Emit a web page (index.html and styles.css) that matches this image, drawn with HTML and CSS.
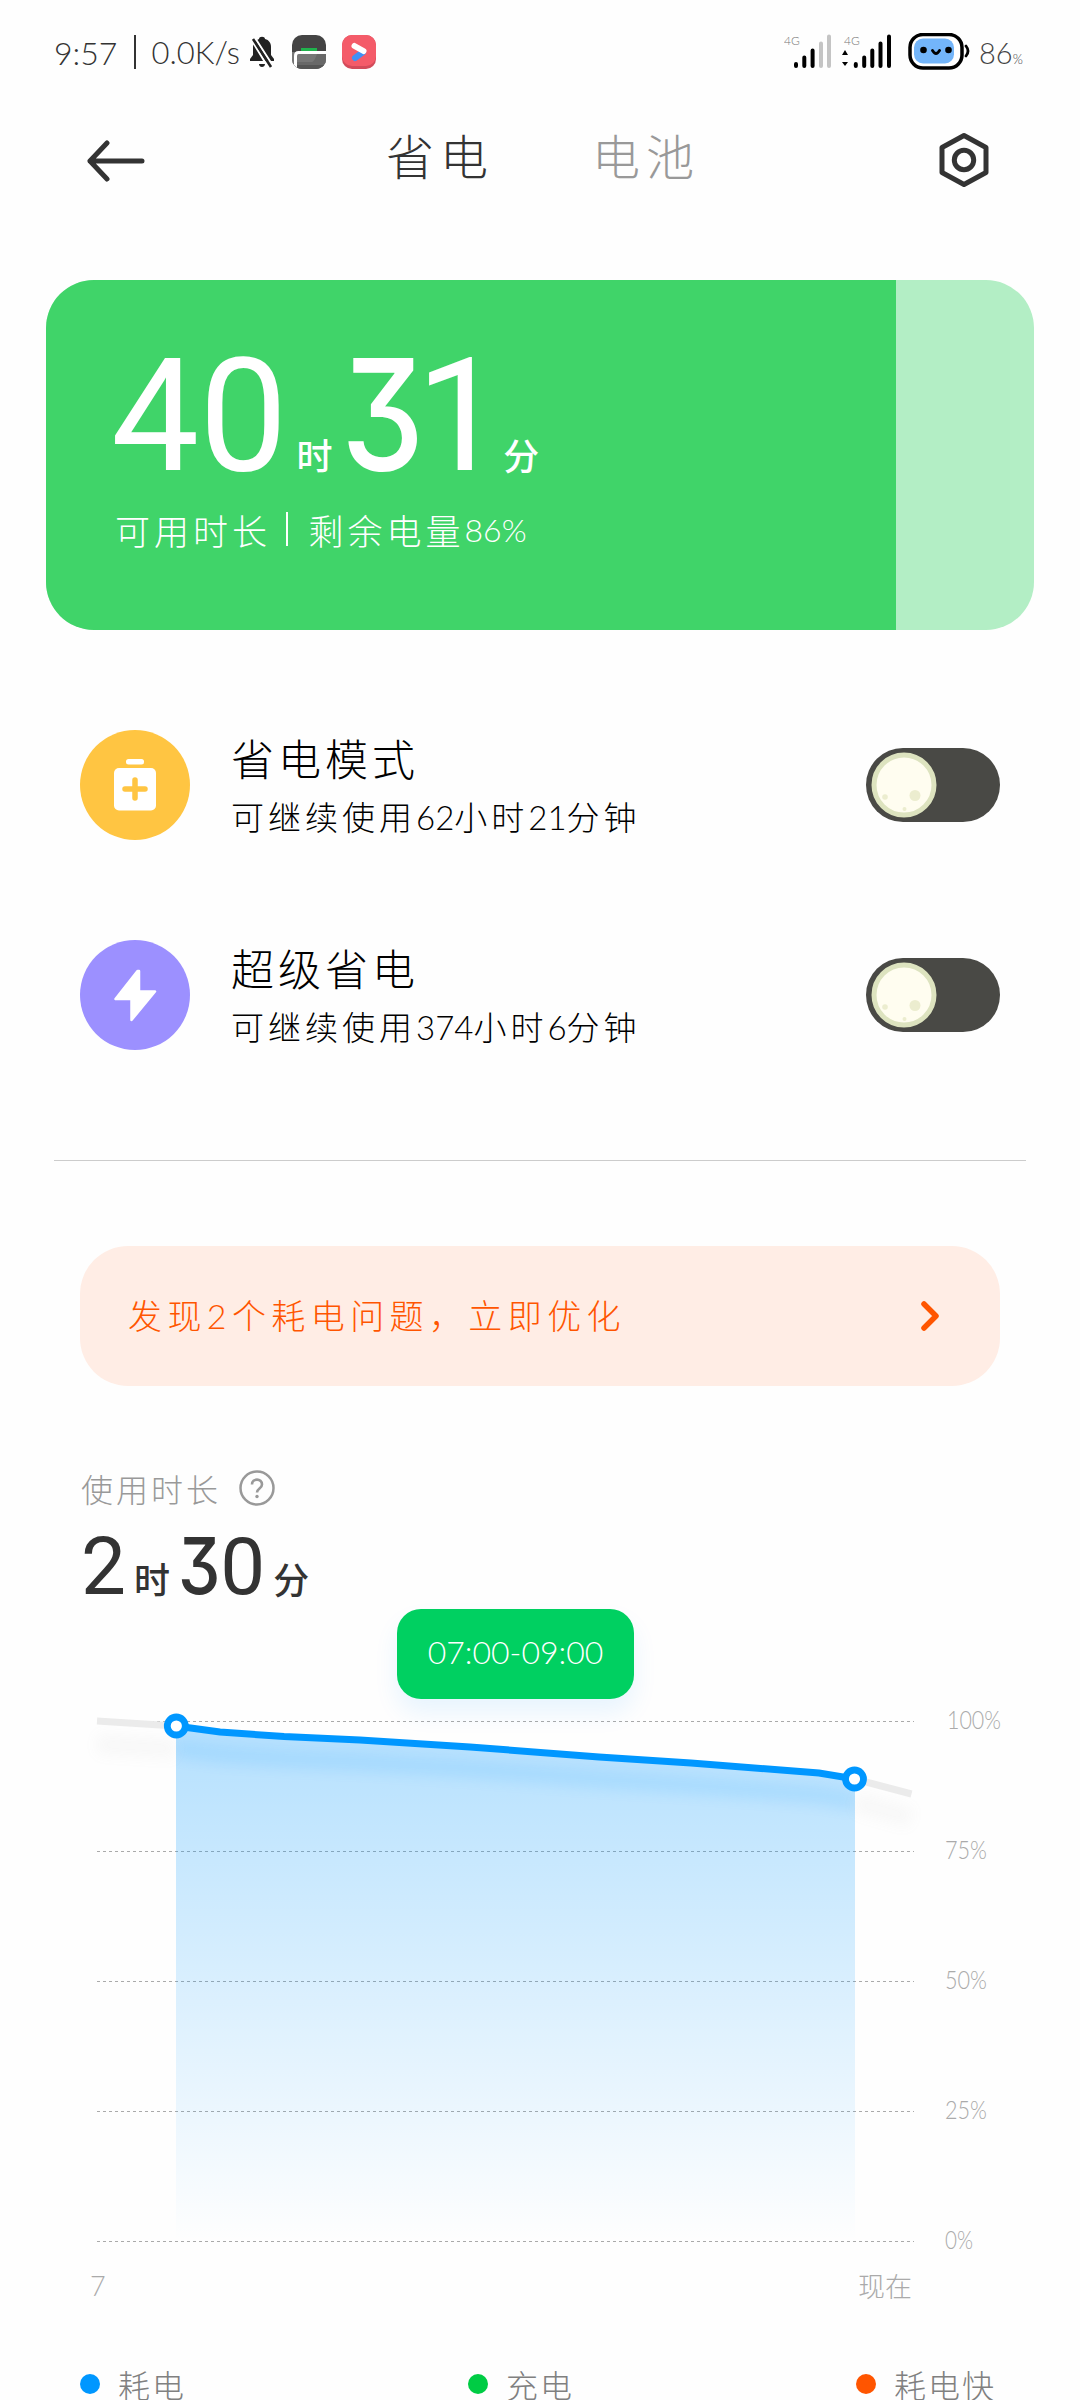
FILE: index.html
```html
<!DOCTYPE html>
<html lang="zh-CN">
<head>
<meta charset="utf-8">
<title>省电</title>
<link rel="stylesheet" href="styles.css">
</head>
<body>
<header class="status">
  <span class="clock">9:57</span><i class="bar"></i><span class="speed">0.0K/s</span>
  <svg class="bell" width="26" height="32" viewBox="0 0 26 32"><path d="M1 25v-2l3-4v-8c0-4 3-7 6-8 0-3 6-3 6 0 4 1 6 4 6 8v8l3 4v2zM10 28h6c0 4-6 4-6 0z" fill="#222"/><path d="M2 3 19 31M6 2l18 28" stroke="#fff" stroke-width="2.2"/><path d="m4 3 18 28" stroke="#222" stroke-width="2.6"/></svg>
  <svg class="app" width="34" height="34" viewBox="0 0 34 34"><defs><clipPath id="tile"><rect width="34" height="34" rx="10"/></clipPath></defs><g clip-path="url(#tile)"><rect width="34" height="34" fill="#444"/><rect y="17" width="34" height="17" fill="#777"/><path d="M9 13h16v4H9z" fill="#20b34d"/><path d="M25 19q-3 8-5 8H5v7h29V19z" fill="#686868"/><path d="M4 30h30v4H4z" fill="#555"/><path d="M3.500 34V21q0-3.500 3-3.500H34" fill="none" stroke="#fff" stroke-width="3"/></g></svg>
  <svg class="app" width="34" height="34" viewBox="0 0 34 34"><rect width="34" height="34" rx="10" fill="#d34b5a"/><rect width="34" height="31" rx="10" fill="#f45b69"/><path d="m13 23 8-6" stroke="#4090f5" stroke-width="6" stroke-linecap="round"/><path d="m12.500 11 9 5" stroke="#fff" stroke-width="6" stroke-linecap="round"/></svg>
  <span class="push"></span>
  <svg class="signal" width="186" height="38" viewBox="784 34 186 38">
    <g class="net"><text x="784" y="46">4G</text><text x="844" y="46">4G</text></g>
    <g stroke="#000" stroke-width="4" stroke-linecap="round"><path d="M796 65v2M804.300 58.500V67M812.600 51.500V67M855.800 65v2M864.200 58.500V67M872.300 51.500V67M880.500 44.500V67M889 37.500V67"/><path d="M821 44.500V67M829 37.500V67" stroke="#c4c4c4"/></g>
    <path d="m845 51 3 5h-6zM845 67l3-4h-6z"/>
    <rect x="910" y="35.500" width="52" height="33.500" rx="13" fill="#fff" stroke="#000" stroke-width="3.500"/><rect x="914" y="39.500" width="40" height="25" rx="9" fill="#73b5fa"/>
    <circle cx="923.500" cy="51" r="3.300"/><circle cx="948.500" cy="51" r="3.300"/><path d="M932.500 51.500q3.500 6 7 0M966 47q4 5 0 10" fill="none" stroke="#000" stroke-width="2.800" stroke-linecap="round"/>
  </svg>
  <span class="level">86<small>%</small></span>
</header>
<nav class="nav">
  <svg class="back" width="58" height="42" viewBox="0 0 58 42"><path d="M20 3 3 21l17 18M3 21h52" fill="none" stroke="#333" stroke-width="5" stroke-linecap="round" stroke-linejoin="round"/></svg>
  <span class="tab on">省电</span><span class="tab">电池</span>
  <svg class="gear" width="52" height="56" viewBox="0 0 52 56"><path d="M26 3.500 48 15.500v25L26 52.500 4 40.500v-25z" fill="none" stroke="#333" stroke-width="5" stroke-linejoin="round"/><circle cx="26" cy="28" r="9.700" fill="none" stroke="#333" stroke-width="5"/></svg>
</nav>
<section class="card">
  <div class="fill" style="width:86%">
    <div class="big"><span>40</span><em>时</em><span><b>3</b>1</span><em>分</em></div>
    <div class="remain"><span>可用时长</span><i class="bar"></i><span>剩余电量</span><span class="num">86%</span></div>
  </div>
</section>
<section class="modes">
  <div class="mode">
    <svg class="disc" width="110" height="110" viewBox="0 0 110 110"><circle cx="55" cy="55" r="55" fill="#ffc542"/><rect x="46" y="29" width="18" height="5.500" rx="2.500" fill="#fff"/><rect x="34" y="38" width="42" height="42.500" rx="5" fill="#fff"/><path d="M55 50v18M45 59h20" stroke="#ffc542" stroke-width="5.500" stroke-linecap="round"/></svg>
    <div class="text"><h2>省电模式</h2><p>可继续使用<span class="num">62</span>小时<span class="num">21</span>分钟</p></div>
    <svg class="switch" width="134" height="74" viewBox="0 0 134 74"><rect width="134" height="74" rx="37" fill="#494945"/><circle cx="38" cy="37" r="30" fill="#fffdf0" stroke="#dde3bf" stroke-width="5"/><g fill="#ecedcf"><circle cx="19" cy="49" r="2.800"/><circle cx="49" cy="47.500" r="5.500"/><circle cx="38.500" cy="61" r="2"/></g></svg>
  </div>
  <div class="mode">
    <svg class="disc" width="110" height="110" viewBox="0 0 110 110"><circle cx="55" cy="55" r="55" fill="#9c90ff"/><path d="M57.500 31 35.500 59h16v21L75 51.500H59V31z" fill="#fff" stroke="#fff" stroke-width="2.500" stroke-linejoin="round"/></svg>
    <div class="text"><h2>超级省电</h2><p>可继续使用<span class="num">374</span>小时<span class="num">6</span>分钟</p></div>
    <svg class="switch" width="134" height="74" viewBox="0 0 134 74"><rect width="134" height="74" rx="37" fill="#494945"/><circle cx="38" cy="37" r="30" fill="#fffdf0" stroke="#dde3bf" stroke-width="5"/><g fill="#ecedcf"><circle cx="19" cy="49" r="2.800"/><circle cx="49" cy="47.500" r="5.500"/><circle cx="38.500" cy="61" r="2"/></g></svg>
  </div>
</section>
<hr class="rule">
<section class="notice"><span>发现<span class="num">2</span>个耗电问题，立即优化</span>
  <svg width="20" height="32" viewBox="0 0 20 32"><path d="m4 4 12 12L4 28" fill="none" stroke="#ff5500" stroke-width="5.500" stroke-linecap="round" stroke-linejoin="round"/></svg>
</section>
<section class="usage">
  <div class="caption"><span>使用时长</span><svg width="36" height="36" viewBox="0 0 36 36"><circle cx="18" cy="18" r="16.500" fill="none" stroke="#999" stroke-width="2.500"/><path d="M13 14.500c0-6.500 10-6.500 10 0 0 4-5 4-5 8" fill="none" stroke="#999" stroke-width="2.600"/><circle cx="18" cy="26.500" r="1.700" fill="#999"/></svg></div>
  <div class="total"><span>2</span><em>时</em><span><b>3</b>0</span><em>分</em></div>
</section>
<section class="chart">
  <svg width="1080" height="660" viewBox="0 1600 1080 660">
    <defs>
      <linearGradient id="area" x1="0" y1="1726" x2="0" y2="2241" gradientUnits="userSpaceOnUse"><stop offset="0" stop-color="#0097ff" stop-opacity=".29"/><stop offset="1" stop-color="#0097ff" stop-opacity="0"/></linearGradient>
      <clipPath id="under"><path d="M176 1726 220 1732 284 1736.500 360 1740 470 1747 599 1757 691 1763 819 1773 855 1779V2241H176z"/></clipPath>
      <filter id="soft" x="-10%" y="-100%" width="120%" height="300%"><feGaussianBlur stdDeviation="7"/></filter>
    </defs>
    <path d="M97 1721.500H914M97 1851.500H914M97 1981.500H914M97 2111.500H914M97 2241.500H914" stroke="#aaa" stroke-width="1" stroke-dasharray="3 3"/>
    <g fill="none" stroke-width="7">
      <path d="m97 1744 79 5M855 1802l56 16" stroke="#999" opacity=".06" stroke-width="20" filter="url(#soft)"/>
      <path d="m97 1721 79 5M855 1779l56.500 15" stroke="#ebebeb"/>
      <path d="M176 1726 220 1732 284 1736.500 360 1740 470 1747 599 1757 691 1763 819 1773 855 1779V2241H176z" fill="url(#area)"/>
      <g clip-path="url(#under)"><path d="m176 1748 44 6 64 4.500 76 3.500 110 7 129 10 92 6 128 10 36 6" stroke="#0097ff" opacity=".1" stroke-width="18" filter="url(#soft)"/></g>
      <path d="m176 1726 44 6 64 4.500 76 3.500 110 7 129 10 92 6 128 10 36 6" stroke="#0097ff"/>
    </g>
    <g fill="#fff" stroke="#0097ff" stroke-width="6.800"><circle cx="176.300" cy="1726" r="9"/><circle cx="854.500" cy="1779" r="9"/></g>
    <g class="axis"><text x="947" y="1729" textLength="54" lengthAdjust="spacingAndGlyphs">100%</text><text x="945" y="1859" textLength="42" lengthAdjust="spacingAndGlyphs">75%</text><text x="945" y="1989" textLength="42" lengthAdjust="spacingAndGlyphs">50%</text><text x="945" y="2119" textLength="42" lengthAdjust="spacingAndGlyphs">25%</text><text x="945" y="2249" textLength="28" lengthAdjust="spacingAndGlyphs">0%</text></g>
  </svg>
  <div class="tip">07:00-09:00</div>
</section>
<div class="ends"><span>7</span><span>现在</span></div>
<footer class="legend"><span class="key use">耗电</span><span class="key charge">充电</span><span class="key fast">耗电快</span></footer>
</body>
</html>
```
FILE: styles.css
```css
* { box-sizing: border-box; }
body { margin: 0; width: 1080px; height: 2400px; overflow: hidden; background: #fefefe; color: #000; font-family: Lato, "Noto Sans CJK SC", sans-serif; font-weight: 300; }
svg { display: block; flex: none; }
h2, p { margin: 0; font-weight: 300; }
em, b { font-style: normal; }
.status { height: 104px; padding-left: 54px; display: flex; align-items: center; color: #333; font-size: 32px; white-space: nowrap; }
.clock { width: 80px; }
.bar { width: 1.5px; height: 34px; background: currentColor; }
.speed { width: 98.500px; margin-left: 16px; margin-right: -1px; font-size: 31px; }
.bell { margin-right: 17px; }
.app { margin-right: 16px; }
.push { flex: 1; }
.net { font-size: 12px; fill: #777; }
.level { width: 101px; margin-left: 9px; font-size: 29px; color: #444; }
.level small { font-size: 13px; }
.nav { height: 176px; padding: 0 90px 0 87px; display: flex; align-items: flex-start; color: #999; }
.back { margin-top: 36px; }
.tab { width: 210px; height: 110px; line-height: 106px; font-size: 48px; letter-spacing: 6px; white-space: nowrap; }
.tab.on { margin-left: 241px; width: 206px; color: #333; }
.gear { margin-top: 28px; margin-left: auto; }
.card { width: 988px; height: 350px; margin: 0 46px; border-radius: 48px; overflow: hidden; background: #b3eec5; }
.fill { height: 350px; padding-left: 65px; background: #40d469; color: #fff; }
.big, .total { display: flex; align-items: baseline; font-family: Roboto, sans-serif; font-weight: 400; white-space: nowrap; }
.big { height: 222px; padding-top: 43px; font-size: 157px; line-height: 182px; }
.big em, .total em { font-family: "Noto Sans CJK SC", sans-serif; font-size: 36px; font-weight: 500; line-height: 1; }
.big em { margin: 0 8px 0 9px; }
.big em:last-child { margin-left: -1px; }
.big b, .total b { display: inline-block; width: .54em; font-family: Inter, sans-serif; font-weight: 500; font-feature-settings: "cv09"; font-size: .98em; transform: scaleX(.86); transform-origin: left; }
.big b { width: .49em; }
.remain { display: flex; align-items: center; height: 54px; padding-left: 4px; font-size: 35px; letter-spacing: 4px; white-space: nowrap; }
.remain .bar { margin: 0 21px 0 15px; }
.remain .num { font-size: 32px; letter-spacing: 0; }
.modes { padding: 100px 80px 0; }
.mode { height: 110px; margin-bottom: 100px; display: flex; align-items: center; }
.text { margin-left: 41px; padding-top: 2px; flex: 1; white-space: nowrap; }
h2 { font-size: 43px; line-height: 62px; letter-spacing: 4px; }
.text p { font-size: 33px; line-height: 52px; letter-spacing: 4px; }
.text .num { letter-spacing: 0; }
.rule { width: 972px; height: 1px; margin: 110px 54px 85px; border: 0; background: #ccc; }
.notice { width: 920px; height: 140px; margin: 0 80px; padding: 0 60px 0 48px; border-radius: 48px; background: #ffede5; color: #ff5500; display: flex; align-items: center; justify-content: space-between; font-size: 34px; letter-spacing: 5.400px; }
.notice > span { padding-bottom: 4px; }
.usage { height: 214px; padding: 77px 80px 0; }
.caption { height: 50px; display: flex; align-items: center; gap: 18px; color: #999; font-size: 32px; letter-spacing: 3px; padding-left: 1px; }
.total { color: #333; font-size: 80px; line-height: 96px; padding: 5px 0 0 1px; }
.total em { margin: 0 8px; }
.chart { position: relative; height: 660px; }
.tip { position: absolute; left: 397px; top: 9px; width: 237px; height: 90px; border-radius: 24px; background: #00d061; color: #fff; text-align: center; font-size: 32px; line-height: 86px; box-shadow: 0 14px 24px rgba(0, 140, 255, .09); }
.axis { font-size: 26px; fill: #aaa; }
.ends { height: 50px; padding: 0 168px 0 90px; display: flex; align-items: center; justify-content: space-between; color: #aaa; font-size: 27px; }
.legend { height: 80px; padding: 32px 80px 0; display: grid; grid-template-columns: 388px 388px 144px; color: #808080; font-size: 32px; letter-spacing: 2px; white-space: nowrap; }
.key { display: flex; height: 84px; align-items: center; gap: 18px; }
.key::before { content: ""; width: 20px; height: 20px; flex: none; border-radius: 50%; }
.use::before { background: #0097ff; }
.charge::before { background: #00cc44; }
.fast::before { background: #ff5500; }
```
